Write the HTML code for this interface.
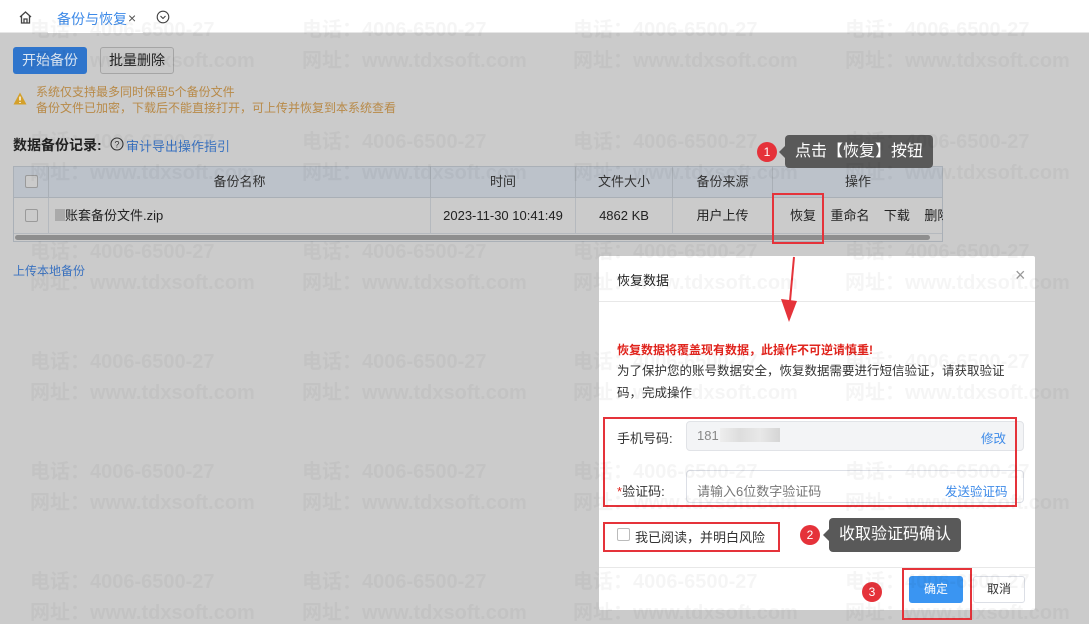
<!DOCTYPE html>
<html><head><meta charset="utf-8"><style>
*{margin:0;padding:0;box-sizing:border-box}
body{width:1089px;height:621px;overflow:hidden;position:relative;background:#cbcbcb;font-family:"Liberation Sans","Noto Sans CJK SC",sans-serif;font-size:13px;color:#333}
.a{position:absolute}
.top{left:0;top:0;width:1089px;height:33px;background:#fff;border-bottom:1px solid #e6e6e6}
.wm{position:absolute;font-weight:bold;font-size:20px;color:rgba(0,0,0,0.04);white-space:nowrap;line-height:20px;z-index:20;pointer-events:none;font-family:"Liberation Sans","Noto Sans CJK SC",sans-serif}
.th{position:absolute;top:166px;height:32px;line-height:32px;text-align:center;border-right:1px solid #a9afb6;font-size:13px;color:#333}
.td{position:absolute;top:198px;height:35px;line-height:35px;text-align:center;border-right:1px solid #b5b9be;font-size:13px;color:#222}
.cb{position:absolute;width:13px;height:13px;border:1px solid #9a9a9a;border-radius:2px;background:#cbcbcb}
.redbox{position:absolute;border:2px solid #e5333a;z-index:15}
.badge{position:absolute;width:20px;height:20px;border-radius:50%;background:#e5323a;color:#fff;font-size:12px;text-align:center;line-height:20px;z-index:16}
.tip{position:absolute;background:#595959;color:#fff;font-size:16px;border-radius:4px;z-index:16;padding:0 10px}
.tip:before{content:"";position:absolute;left:-6px;top:50%;margin-top:-6px;border:6px solid transparent;border-left:0;border-right-color:#595959}
</style></head><body>
<div class="a top"></div>
<svg class="a" style="left:18px;top:10px" width="15" height="15" viewBox="0 0 15 15"><path d="M2 7 L7.5 2 L13 7 M3.5 6 V13 H11.5 V6 M6 13 V9 H9 V13" fill="none" stroke="#444" stroke-width="1.3"/></svg>
<div class="a" style="left:48px;top:5px;width:95px;height:28px;background:#fff;border-radius:3px 3px 0 0"></div>
<div class="a" style="left:57px;top:9px;font-size:14px;color:#3d8ae8">备份与恢复</div>
<div class="a" style="left:128px;top:10px;font-size:14px;color:#555">×</div>
<svg class="a" style="left:156px;top:10px" width="14" height="14" viewBox="0 0 14 14"><circle cx="7" cy="7" r="5.8" fill="none" stroke="#444" stroke-width="1.1"/><path d="M4.5 6 L7 8.5 L9.5 6" fill="none" stroke="#444" stroke-width="1.1"/></svg>

<div class="a" style="left:13px;top:47px;width:74px;height:27px;background:#2f75cc;border-radius:3px;color:#dde8f5;font-size:14px;text-align:center;line-height:27px">开始备份</div>
<div class="a" style="left:100px;top:47px;width:74px;height:27px;border:1px solid #a5a5a5;border-radius:3px;color:#222;font-size:14px;text-align:center;line-height:25px;background:#c8c8c8">批量删除</div>
<svg class="a" style="left:13px;top:92px" width="14" height="13" viewBox="0 0 14 13"><path d="M7 0.5 L13.5 12.5 H0.5Z" fill="#d4a02a"/><path d="M7 4.5 V8.5 M7 10 V11" stroke="#fff" stroke-width="1.4"/></svg>
<div class="a" style="left:36px;top:84px;font-size:12px;line-height:16px;color:#b88a48">系统仅支持最多同时保留5个备份文件<br>备份文件已加密，下载后不能直接打开，可上传并恢复到本系统查看</div>
<div class="a" style="left:13px;top:135px;font-size:14px;font-weight:bold;color:#222">数据备份记录:</div>
<svg class="a" style="left:110px;top:137px" width="14" height="14" viewBox="0 0 14 14"><circle cx="7" cy="7" r="6" fill="none" stroke="#333" stroke-width="1.1"/><text x="7" y="10.5" font-size="9" text-anchor="middle" fill="#333" font-family="Liberation Sans">?</text></svg>
<div class="a" style="left:126px;top:136px;font-size:13px;color:#3a72c0">审计导出操作指引</div>

<div class="a" style="left:13px;top:166px;width:930px;height:76px;border:1px solid #aab0b7;background:#cbcbcb"></div>
<div class="a" style="left:14px;top:167px;width:928px;height:31px;background:#bcc2ca;border-bottom:1px solid #a9afb6"></div>
<div class="th" style="left:14px;width:35px"></div>
<div class="th" style="left:49px;width:382px">备份名称</div>
<div class="th" style="left:431px;width:145px">时间</div>
<div class="th" style="left:576px;width:97px">文件大小</div>
<div class="th" style="left:673px;width:100px">备份来源</div>
<div class="th" style="left:773px;width:170px;border-right:0">操作</div>
<div class="td" style="left:14px;width:35px"></div>
<div class="td" style="left:49px;width:382px;text-align:left;padding-left:6px"><span style="display:inline-block;width:10px;height:12px;background:#aaa;vertical-align:-1px"></span>账套备份文件.zip</div>
<div class="td" style="left:431px;width:145px">2023-11-30 10:41:49</div>
<div class="td" style="left:576px;width:97px">4862 KB</div>
<div class="td" style="left:673px;width:100px">用户上传</div>
<div class="td" style="left:773px;width:170px;border-right:0;text-align:left;padding-left:17px;white-space:nowrap;overflow:hidden">恢复&nbsp;&nbsp;&nbsp;&nbsp;重命名&nbsp;&nbsp;&nbsp;&nbsp;下载&nbsp;&nbsp;&nbsp;&nbsp;删除</div>
<div class="a" style="left:14px;top:233px;width:928px;height:1px;background:#b5b9be"></div>
<div class="a" style="left:15px;top:235px;width:915px;height:5px;background:#8e8e8e;border-radius:3px"></div>
<div class="cb" style="left:25px;top:175px"></div>
<div class="cb" style="left:25px;top:209px"></div>
<div class="a" style="left:13px;top:262px;font-size:12px;color:#3a72c0">上传本地备份</div>

<div class="a" style="left:599px;top:256px;width:436px;height:354px;background:#fff;border-radius:2px"></div>
<div class="a" style="left:599px;top:301px;width:436px;height:1px;background:#e8e8e8"></div>
<div class="a" style="left:617px;top:270px;font-size:13px;color:#222">恢复数据</div>
<div class="a" style="left:1015px;top:265px;font-size:18px;color:#999">×</div>
<div class="a" style="left:617px;top:341px;font-size:12px;font-weight:bold;color:#e0241d">恢复数据将覆盖现有数据，此操作不可逆请慎重!</div>
<div class="a" style="left:617px;top:360px;width:400px;font-size:12.5px;line-height:22px;color:#333">为了保护您的账号数据安全，恢复数据需要进行短信验证，请获取验证码，完成操作</div>
<div class="a" style="left:617px;top:428px;font-size:13px;color:#333">手机号码:</div>
<div class="a" style="left:686px;top:421px;width:338px;height:30px;background:#f3f4f6;border:1px solid #e1e3e7;border-radius:4px"></div>
<div class="a" style="left:697px;top:428px;font-size:13px;color:#888">181</div>
<div class="a" style="left:720px;top:428px;width:60px;height:14px;background:linear-gradient(90deg,#eee,#ddd,#e8e8e8,#d5d5d5)"></div>
<div class="a" style="left:981px;top:428px;font-size:12.5px;color:#3d8ae8">修改</div>
<div class="a" style="left:617px;top:481px;font-size:13px;color:#333"><span style="color:#e0241d">*</span>验证码:</div>
<div class="a" style="left:686px;top:470px;width:338px;height:33px;border:1px solid #dcdfe6;border-radius:4px"></div>
<div class="a" style="left:697px;top:481px;font-size:13px;color:#777">请输入6位数字验证码</div>
<div class="a" style="left:945px;top:481px;font-size:12.5px;color:#3d8ae8">发送验证码</div>
<div class="a" style="left:617px;top:528px;width:13px;height:13px;border:1px solid #bbb;border-radius:2px"></div>
<div class="a" style="left:635px;top:527px;font-size:13px;color:#333">我已阅读，并明白风险</div>
<div class="a" style="left:599px;top:567px;width:436px;height:1px;background:#e8e8e8"></div>
<div class="a" style="left:909px;top:576px;width:54px;height:27px;background:#3a95f2;border-radius:3px;color:#fff;font-size:12px;text-align:center;line-height:27px">确定</div>
<div class="a" style="left:973px;top:576px;width:52px;height:27px;border:1px solid #dcdfe6;border-radius:3px;color:#333;font-size:12px;text-align:center;line-height:25px">取消</div>

<div class="redbox" style="left:772px;top:193px;width:52px;height:51px"></div>
<div class="redbox" style="left:603px;top:417px;width:414px;height:90px"></div>
<div class="redbox" style="left:603px;top:522px;width:177px;height:30px"></div>
<div class="redbox" style="left:902px;top:568px;width:70px;height:52px"></div>
<div class="badge" style="left:757px;top:142px">1</div>
<div class="tip" style="left:785px;top:135px;height:33px;line-height:33px">点击【恢复】按钮</div>
<div class="badge" style="left:800px;top:525px">2</div>
<div class="tip" style="left:829px;top:518px;height:34px;line-height:34px">收取验证码确认</div>
<div class="badge" style="left:862px;top:582px">3</div>
<svg class="a" style="left:778px;top:255px;z-index:16" width="22" height="68" viewBox="0 0 22 68"><path d="M16 2 L12 46" stroke="#e5333a" stroke-width="2"/><path d="M3 44 L11 67 L19 46 Z" fill="#e5333a"/></svg>

<div id="w"></div>
<script>
var h='';var rows=[30,142,252,362,472,582],cols=[30,302,573,845];
rows.forEach(function(y){cols.forEach(function(x){h+='<div class="wm" style="left:'+x+'px;top:'+(y-10)+'px">电话：4006-6500-27</div><div class="wm" style="left:'+x+'px;top:'+(y+21)+'px">网址：www.tdxsoft.com</div>';});});
document.getElementById('w').innerHTML=h;
</script>
</body></html>
